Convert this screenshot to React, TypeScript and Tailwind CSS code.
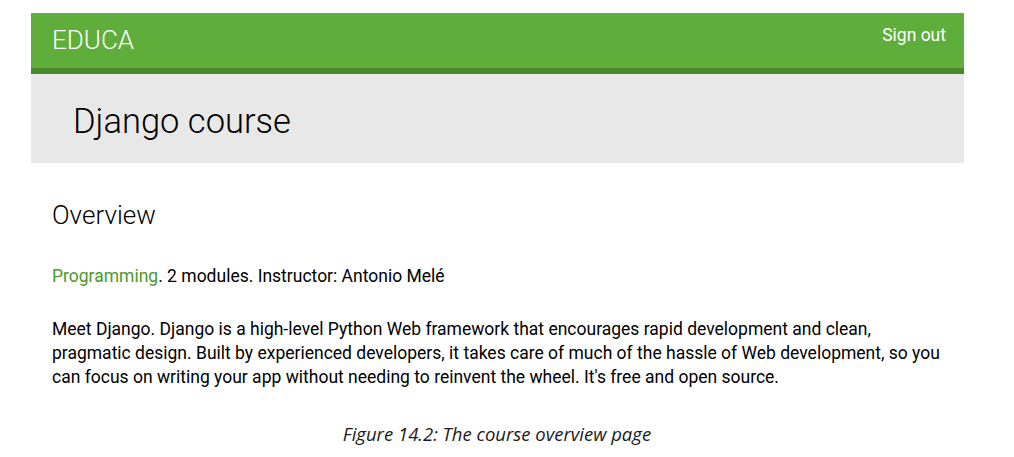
export default function App() {
  return (
    <div className="w-[1014px] h-[457px] bg-white overflow-hidden font-['Roboto',sans-serif] text-black">
      <div className="ml-[31px] mt-[13px] w-[933px]">
        <header className="h-[61px] bg-[#5fad3a] border-b-[6px] border-[#4b8a2c] flex justify-between">
          <div className="pl-[21px] pt-[12px] text-[26px] leading-[30px] font-light text-white">
            EDUCA
          </div>
          <div className="pr-[18px] pt-[12px] text-[17.5px] leading-[20px] text-white">
            Sign out
          </div>
        </header>
        <div className="h-[89px] bg-[#e8e8e8] pl-[42px] pt-[27px]">
          <h1 className="text-[34.5px] leading-[40px] font-light">Django course</h1>
        </div>
        <div className="pl-[21px] pt-[37px]">
          <h2 className="text-[26px] leading-[30px] font-light">Overview</h2>
          <p className="mt-[34px] text-[17.5px] leading-[24px]">
            <span className="text-[#4a9a2b]">Programming</span>. 2 modules. Instructor: Antonio Melé
          </p>
          <p className="mt-[29px] text-[17.5px] leading-[24px] w-[910px]">
            Meet Django. Django is a high-level Python Web framework that encourages rapid development and clean,
            <br />
            pragmatic design. Built by experienced developers, it takes care of much of the hassle of Web development, so you
            <br />
            can focus on writing your app without needing to reinvent the wheel. It's free and open source.
          </p>
        </div>
      </div>
      <div className="mt-[34px] text-center pr-[20px] text-[18.5px] leading-[22px] italic font-['Open_Sans',sans-serif] text-[#1a1a1a]">
        Figure 14.2: The course overview page
      </div>
    </div>
  );
}
